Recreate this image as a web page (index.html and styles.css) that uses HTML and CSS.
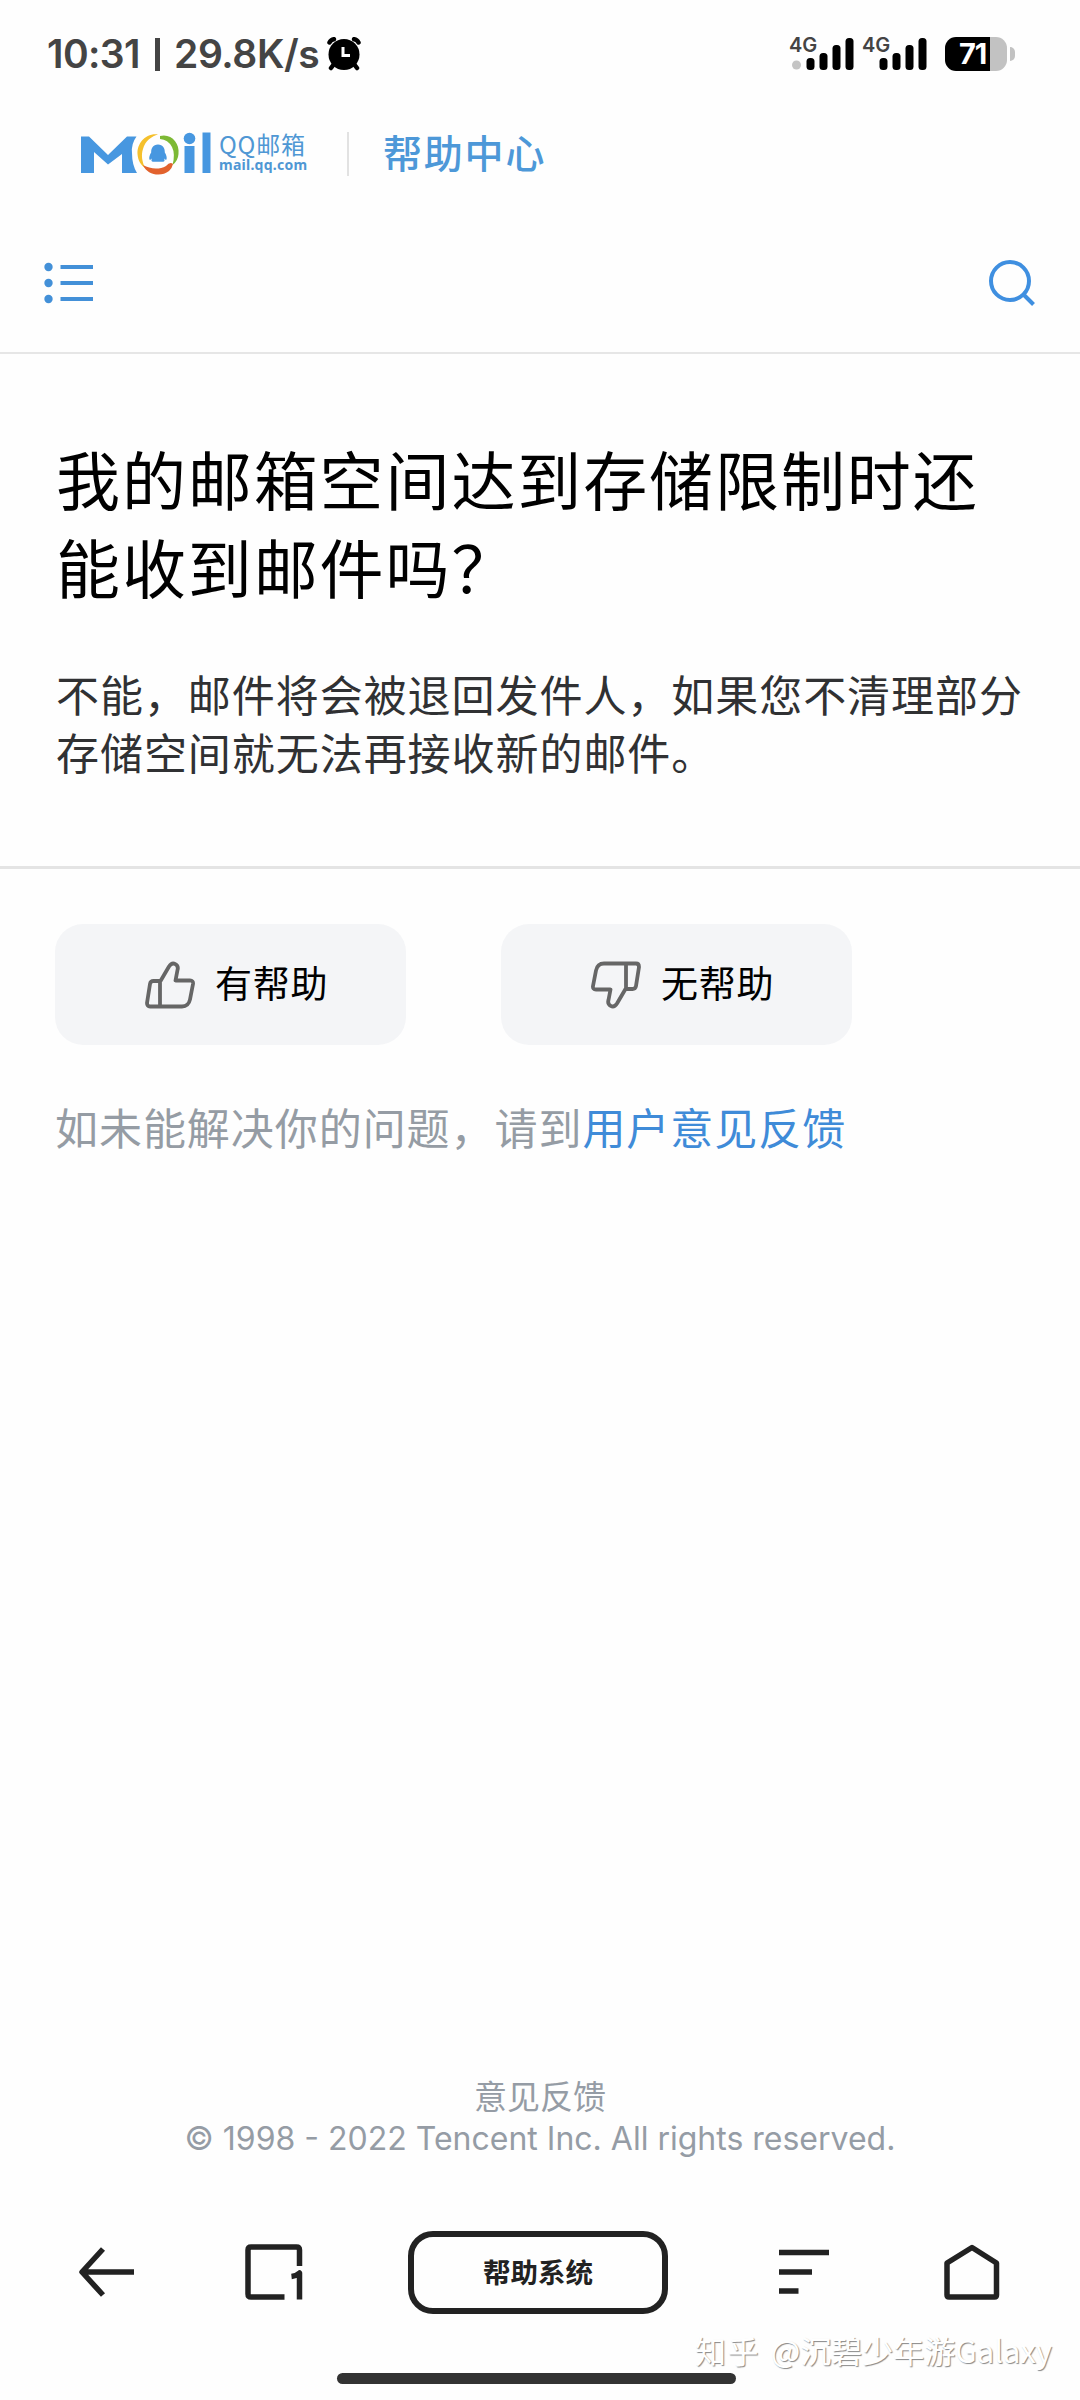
FILE: index.html
```html
<!DOCTYPE html>
<html lang="zh-CN">
<head>
<meta charset="utf-8">
<title>帮助中心</title>
<link rel="stylesheet" href="styles.css">
</head>
<body>
<header class="status">
  <div class="status-left">
    <span class="clock">10:31</span><span class="bar"></span><span class="speed">29.8K/s</span>
    <svg class="alarm" width="34" height="34" viewBox="0 0 34 34">
      <g stroke="#000" stroke-width="4.5" stroke-linecap="round"><path d="M7 27l-3 4M27 27l3 4M2.5 5.500Q4 2.500 7 2.200M31.500 5.500Q30 2.500 27 2.200"/></g>
      <circle cx="17" cy="17.500" r="15.500"/>
      <path d="M16 10v8.500h7" fill="none" stroke="#fff" stroke-width="3"/>
    </svg>
  </div>
  <div class="status-right">
    <div class="signal"><span class="net">4G</span>
      <svg width="65" height="34" viewBox="0 0 65 34"><circle cx="7.500" cy="28" r="4.500" fill="#c4c4c4"/><rect x="17.500" y="21" width="8" height="12" rx="3.500"/><rect x="30.500" y="16" width="8" height="17" rx="3.500"/><rect x="43.500" y="8" width="8" height="25" rx="3.500"/><rect x="56.500" y="1" width="8" height="32" rx="3.500"/></svg>
    </div>
    <div class="signal"><span class="net">4G</span>
      <svg width="65" height="34" viewBox="0 0 65 34"><rect x="17.500" y="21" width="8" height="12" rx="3.500"/><rect x="30.500" y="16" width="8" height="17" rx="3.500"/><rect x="43.500" y="8" width="8" height="25" rx="3.500"/><rect x="56.500" y="1" width="8" height="32" rx="3.500"/></svg>
    </div>
    <div class="battery">71</div><span class="nub"></span>
  </div>
</header>

<div class="brand">
  <svg class="logo" width="130" height="44" viewBox="0 0 130 44">
    <g fill="#4797e0">
      <path d="M0 4.500H8L27 23L46 4.500H55.500Q50 12 51 21Q51 33 56 41H41V22L27 32.500L13 20V41H0Z"/>
      <circle cx="108.500" cy="6.500" r="5.800"/><rect x="103.500" y="14" width="10" height="27"/><rect x="121.500" y="0.500" width="8" height="40.500"/>
      <path d="M77 12.500C82 12.500 84 16.500 83.800 20.500C85.500 23 86.500 27 85 28L83 26.500Q84.500 29.500 82 29.800H72Q69.500 29.500 71 26.500L69 28C67.500 27 68.500 23 70.200 20.500C70 16.500 72 12.500 77 12.500Z"/>
    </g>
    <path d="M77 2.500C64 1 56 12 56.500 22C57 29 60 33 64 36C61 29 60 23 62 17C64 9 71 4 77 2.500Z" fill="#f5c02c"/>
    <path d="M79 4C90 1 99 11 97.500 22Q97 29 91.500 33Q94.500 22 91 15Q87 7.500 79 7Z" fill="#7db935"/>
    <path d="M62 33C66 43 80 45.500 88 39Q91 36.500 92 32Q89 29.500 85 34C78 38 69 37 62 33Z" fill="#e2622d"/>
  </svg>
  <div class="brand-text"><span class="qq">QQ邮箱</span><span class="domain">mail.qq.com</span></div>
  <span class="brand-split"></span>
  <span class="center-title">帮助中心</span>
</div>

<nav class="tools">
  <svg class="menu" width="52" height="44" viewBox="0 0 52 44"><circle cx="4.500" cy="6" r="4.200"/><circle cx="4.500" cy="22" r="4.200"/><circle cx="4.500" cy="38" r="4.200"/><path d="M16.500 4h32.500v4h-32.500zM16.500 20h32.500v4h-32.500zM16.500 36h32.500v4h-32.500z"/></svg>
  <svg width="48" height="48" viewBox="0 0 48 48" fill="none" stroke="#3f8fe0" stroke-width="4"><circle cx="22" cy="22" r="19"/><path d="M35 35l10.500 10.500"/></svg>
</nav>

<main>
  <article class="article">
    <h1>我的邮箱空间达到存储限制时还<br>能收到邮件吗？</h1>
    <p>不能，邮件将会被退回发件人，如果您不清理部分<br>存储空间就无法再接收新的邮件。</p>
  </article>
  <section class="feedback">
    <div class="votes">
      <button class="vote"><svg width="50" height="48" viewBox="0 0 50 48"><path d="M15.500 20L24 5.500C28-.500 34 4 32.500 9L30.500 19.500H45Q48.500 19.500 48 23L45 38.500Q43.500 45.500 37 45.500H5Q2 45.500 2 42L5 23Q5.500 20 8.500 20ZM15 20V45"/></svg><span>有帮助</span></button>
      <button class="vote"><svg width="50" height="48" viewBox="0 0 50 48"><path d="M34.500 28L26 42.500C22 48.500 16 44 17.500 39L19.500 28.500H5Q1.500 28.500 2 25L5 9.500Q6.500 2.500 13 2.500H45Q48 2.500 48 6L45 25Q44.500 28 41.500 28ZM35 28V3"/></svg><span>无帮助</span></button>
    </div>
    <p class="more">如未能解决你的问题，请到<a>用户意见反馈</a></p>
  </section>
</main>

<footer class="legal"><div class="legal-link">意见反馈</div><div class="copy">© 1998 - 2022 Tencent Inc. All rights reserved.</div></footer>

<nav class="browser">
  <svg class="back" width="58" height="60" viewBox="0 0 58 60"><path d="M26 7L5 30L26 53M4 30H57"/></svg>
  <svg class="tabs" width="58" height="60" viewBox="0 0 58 60"><path d="M54.500 24V8Q54.500 5 51.500 5H6Q3 5 3 8V52Q3 55 6 55H39.500M46.500 34.500Q51 34 54.500 31V57.500"/></svg>
  <div class="page-name">帮助系统</div>
  <svg class="lines" width="52" height="60" viewBox="0 0 52 60"><path d="M1 7.500H51M1 27H34M1 46H20.500"/></svg>
  <svg class="home" width="58" height="60" viewBox="0 0 58 60"><path d="M4 21L29 5.500L53.500 21V53Q53.500 55 51.500 55H6Q4 55 4 53Z"/></svg>
</nav>
<div class="gesture"></div>
<div class="watermark"><span class="site">知乎</span><span class="user">@沉碧少年游Galaxy</span></div>
</body>
</html>
```
FILE: styles.css
```css
* { box-sizing: border-box; }
body {
  margin: 0; width: 1080px; height: 2400px; overflow: hidden; position: relative;
  display: flex; flex-direction: column; background: #fefefe;
  font-family: "Noto Sans CJK SC", sans-serif; color: #000;
}
svg { display: block; flex: none; }
h1, p { margin: 0; font-weight: 400; white-space: nowrap; }

.status { height: 110px; display: flex; justify-content: space-between; align-items: flex-start; padding: 37px 65px 0 47px; font-family: Inter, sans-serif; }
.status-left, .status-right { display: flex; height: 34px; align-items: center; }
.status-left { color: #444; font-size: 39px; font-weight: 600; line-height: 34px; white-space: nowrap; }
.clock { width: 108px; letter-spacing: -0.6px; }
.bar { width: 5px; height: 33px; background: #444; margin-right: 14px; }
.speed { width: 153px; letter-spacing: -0.4px; }
.signal { position: relative; margin-right: 8px; }
.net { position: absolute; left: 0; top: -2px; font-size: 20px; line-height: 20px; font-weight: 600; color: #444; }
.battery { width: 62px; height: 34px; margin-left: 10px; border-radius: 11px; background: linear-gradient(90deg, #000 45px, #c2c2c2 45px); color: #fff; font-size: 29px; line-height: 34px; font-weight: 700; padding-left: 14px; letter-spacing: -1px; }
.nub { width: 5px; height: 14px; margin-left: 3px; border-radius: 0 7px 7px 0; background: #c2c2c2; }

.brand { height: 110px; padding: 22px 0 0 81px; display: flex; align-items: flex-start; }
.brand-text { display: flex; flex-direction: column; width: 128px; padding-left: 8px; color: #4f97d4; white-space: nowrap; }
.qq { font-size: 24px; line-height: 24px; letter-spacing: 0.8px; margin-bottom: 1px; }
.domain { font: 700 14px/16px "Noto Sans", sans-serif; letter-spacing: 0.25px; }
.brand-split { width: 2px; height: 44px; margin: 0 34px 0 8px; background: #e2e2e2; }
.center-title { font-size: 39px; line-height: 38px; font-weight: 500; letter-spacing: 1.8px; color: #4d98d8; }

.tools { height: 134px; border-bottom: 2px solid #e6e6e6; padding: 39px 44px 0 44px; display: flex; justify-content: space-between; align-items: flex-start; }
.menu { margin-top: 2px; fill: #4390d8; }

.article { height: 515px; padding: 79px 56px 0; border-bottom: 3px solid #e4e4e4; }
.article h1 { font-size: 64px; line-height: 88px; letter-spacing: 1.9px; }
.article p { margin-top: 55px; font-size: 43px; line-height: 58px; letter-spacing: 0.95px; color: #303133; }

.feedback { padding: 55px 55px 0; }
.votes { display: flex; gap: 94px; }
.vote { width: 351px; height: 121px; border: 0; border-radius: 28px; background: #f4f5f7; display: flex; align-items: center; padding: 0 0 0 90px; gap: 20px; font: 400 37px/50px "Noto Sans CJK SC", sans-serif; letter-spacing: 0.7px; color: #000; }
.vote span { padding-bottom: 6px; }
.vote + .vote { margin-left: 1px; }
.vote svg { fill: none; stroke: #666; stroke-width: 3.800; stroke-linejoin: round; }
.more { margin-top: 51px; font-size: 43px; line-height: 60px; letter-spacing: 0.95px; color: #959ca4; }
.more a { color: #3f8bd8; }

.legal { margin-top: auto; margin-bottom: 71px; text-align: center; color: #959ca5; font-size: 33px; line-height: 43px; }
.copy { font-family: Inter, sans-serif; font-size: 32px; letter-spacing: 0; white-space: nowrap; }

.browser { height: 142px; padding-left: 77px; display: flex; align-items: flex-start; }
.browser svg { margin-top: 11px; fill: none; stroke: #222; stroke-width: 5.500; stroke-linejoin: round; }
.browser .tabs { margin-left: 110px; }
.browser .lines { margin: 14px 0 0 110px; }
.browser .home { margin-left: 113px; }
.page-name { width: 260px; height: 83px; margin-left: 105px; border: 6px solid #222; border-radius: 25px; text-align: center; font-size: 27.500px; line-height: 69px; font-weight: 700; color: #222; }
.gesture { width: 399px; height: 11px; border-radius: 6px; background: #333; margin: 0 0 16px 337px; flex: none; }
.watermark { position: absolute; left: 695px; top: 2330px; display: flex; gap: 11px; font-size: 31px; line-height: 40px; color: #fff; text-shadow: 1px 1px 1px #888; white-space: nowrap; }
.site { letter-spacing: 1.5px; }
```
